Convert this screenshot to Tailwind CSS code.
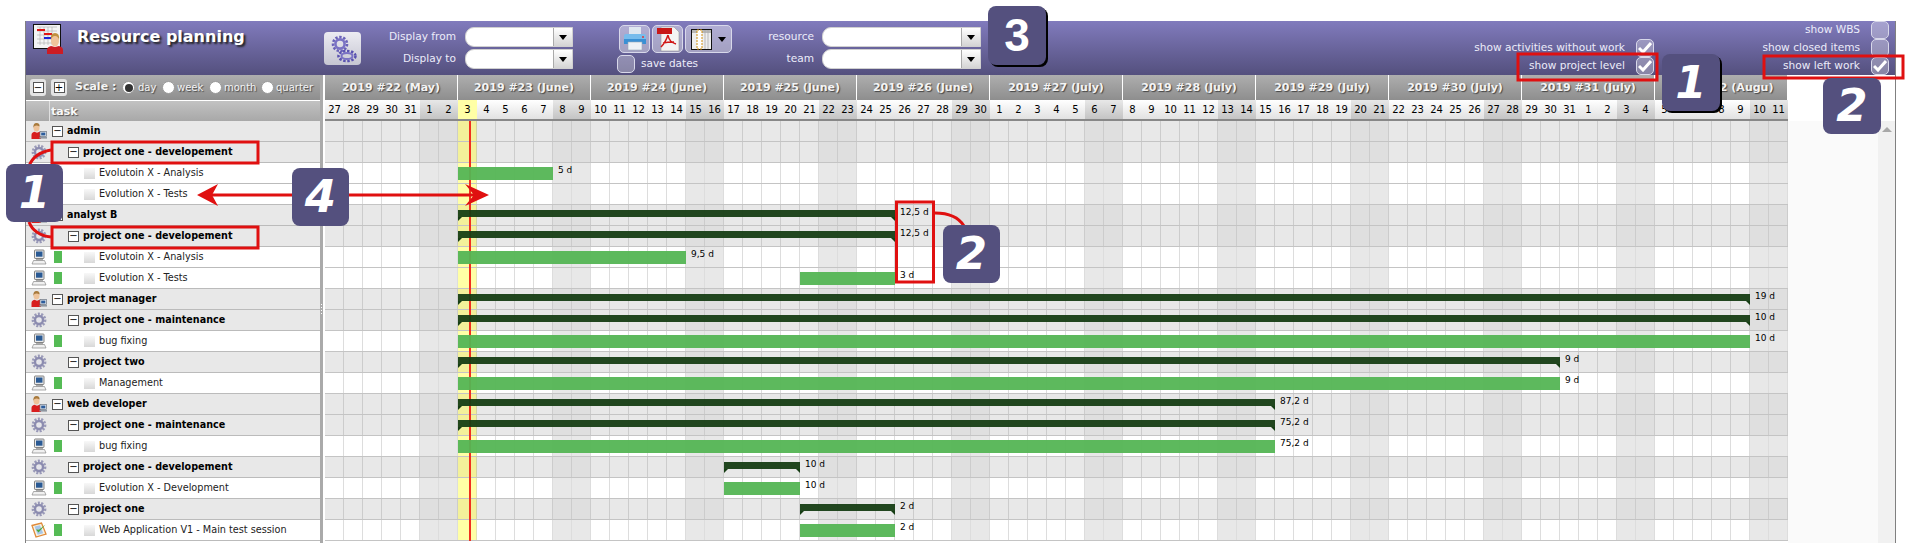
<!DOCTYPE html>
<html lang="en">
<head>
    <meta charset="UTF-8">
    <title>Resource planning</title>
    <script src="https://cdn.jsdelivr.net/npm/@tailwindcss/browser@4"></script>
</head>
<body class="bg-white font-['DejaVu_Sans',sans-serif] text-[10px] text-black overflow-hidden">
    <!-- shared icons -->
    <svg class="hidden">
        <symbol id="gear" viewBox="0 0 16 16">
            <circle cx="8" cy="8" r="6" fill="none" stroke="#9a9ab8" stroke-width="2.8" stroke-dasharray="2 1.300"/>
            <circle cx="8" cy="8" r="4" fill="none" stroke="#8c8cb0" stroke-width="2.400"/>
            <circle cx="8" cy="8" r="1.800" fill="#e4e4ee"/>
        </symbol>
        <symbol id="person" viewBox="0 0 16 16">
            <path d="M.5 16v-4q0-2.500 3-3.200l2.500 1 2.500-1q1.500.5 1.500 2v5.200z" fill="#d81e1e"/>
            <ellipse cx="5.500" cy="4.800" rx="3" ry="3.800" fill="#eec39a"/>
            <path d="M2.400 4.800q-.4-4.800 3.100-4.800t3 3.600q-2.500-1.600-5-.6z" fill="#a87a3c"/>
            <rect x="9" y="8.500" width="6.500" height="5" fill="#dfe3ea" stroke="#6c7480" stroke-width=".7"/>
            <rect x="10.200" y="9.600" width="4.100" height="2.800" fill="#2c5c9c"/>
            <rect x="8.500" y="14" width="7.500" height="1.600" fill="#8e96a0"/>
        </symbol>
        <symbol id="computer" viewBox="0 0 16 16">
            <rect x="3.500" y="1" width="9.500" height="8.500" rx=".7" fill="#e8e8e8" stroke="#666" stroke-width=".8"/>
            <rect x="5" y="2.500" width="6.500" height="5.200" fill="#2a5a94"/>
            <path d="M5 10h7v1.500H5z" fill="#aaa"/>
            <path d="M2.500 11.500h11l1.500 3.500H1z" fill="#f0f0f0" stroke="#888" stroke-width=".7"/>
        </symbol>
        <symbol id="test" viewBox="0 0 16 16">
            <path d="M1 3.500 10.500 1 15 12 5 15z" fill="#f6f2e2" stroke="#e08a3a" stroke-width="1.300"/>
            <path d="M3.500 4.500 9 3.200l3.200 8-5.500 1.600z" fill="#a8c6e8"/>
            <path d="M5 7.500 7.500 10.500 14.500 2.500 8 7.800z" fill="#46a83c"/>
        </symbol>
    </svg>

    <div class="relative mt-[21px] ml-[25px] w-[1871px] h-[522px] border-x border-[#808080]">
        <!-- toolbar -->
        <div class="flex h-[54px] bg-linear-to-b from-[#817bbd] to-[#54507e] text-[#ececfa]">
            <div class="flex w-[298px] shrink-0">
                <svg class="ml-[7px] mt-[3px] w-[31px] h-[30px]" viewBox="0 0 31 30">
                    <rect x=".5" y=".5" width="27" height="24" fill="#f4f4f4" stroke="#111"/>
                    <path d="M4 3h20M4 7h20M4 11h20M4 15h20M4 19h20M7 3v18M11 3v18M15 3v18M19 3v18" stroke="#b4b4b4" stroke-width=".7"/>
                    <rect x="4" y="5" width="8" height="2" fill="#e01515"/>
                    <rect x="11" y="9" width="8" height="2" fill="#e01515"/>
                    <rect x="11" y="13" width="7" height="2" fill="#1a22d8"/>
                    <path d="M14 30v-4q0-3 4-4l4 1 4-1q4 1 4 4v4z" fill="#cc1c24"/>
                    <ellipse cx="22" cy="17" rx="4" ry="5.500" fill="#f0c49c"/>
                    <path d="M18 16q-1-7 4-7t4 7q-1-4-4-4t-4 4z" fill="#c09040"/>
                </svg>
                <div class="ml-[13px] mt-[6px] text-[16px] leading-[20px] font-bold text-white [text-shadow:2px_2px_2px_#222]">Resource planning</div>
            </div>
            <button class="mt-[11px] w-[37px] h-[33px] shrink-0 rounded-[4px] bg-linear-to-b from-[#ececf2] to-[#c6c6d2] flex items-center justify-center">
                <svg class="w-[30px] h-[30px]" viewBox="0 0 30 30">
                    <circle cx="12" cy="10" r="7" fill="none" stroke="#6a62b8" stroke-width="2.600" stroke-dasharray="2.400 1.600"/>
                    <circle cx="12" cy="10" r="4.600" fill="none" stroke="#7a72c4" stroke-width="2.600"/>
                    <ellipse cx="19" cy="22" rx="8.500" ry="5" fill="none" stroke="#5a52b0" stroke-width="2.600" stroke-dasharray="2.400 1.600"/>
                    <ellipse cx="19" cy="22" rx="5.500" ry="3" fill="none" stroke="#7a72c4" stroke-width="2"/>
                </svg>
            </button>
            <div class="mt-[6px] grid grid-cols-[95px_108px] grid-rows-[20px_20px] gap-x-[9px] gap-y-[2px] items-center w-[212px] shrink-0 text-[10.600px]">
                <div class="text-right">Display from</div>
                <div class="flex h-[20px] rounded-l-[9px] bg-white border border-[#d0d0d0] overflow-hidden"><div class="flex-1"></div><div class="w-[19px] bg-linear-to-b from-white to-[#d4d4d4] border-l border-[#aaa] flex items-center justify-center"><i class="w-0 h-0 border-x-[4px] border-x-transparent border-t-[5px] border-t-black"></i></div></div>
                <div class="text-right">Display to</div>
                <div class="flex h-[20px] rounded-l-[9px] bg-white border border-[#d0d0d0] overflow-hidden"><div class="flex-1"></div><div class="w-[19px] bg-linear-to-b from-white to-[#d4d4d4] border-l border-[#aaa] flex items-center justify-center"><i class="w-0 h-0 border-x-[4px] border-x-transparent border-t-[5px] border-t-black"></i></div></div>
            </div>
            <div class="ml-[44px] mt-[4px] w-[125px] shrink-0">
                <div class="flex gap-[2px] ml-[2px] h-[28px]">
                    <button class="w-[31px] h-[28px] rounded-[5px] border border-[#d8d8ea] bg-white/40 flex items-center justify-center">
                        <svg class="w-[26px] h-[26px]" viewBox="0 0 26 26">
                            <path d="M7 1h12v9H7z" fill="#dfe7f0"/>
                            <path d="M2 10q0-2 2-2h18q2 0 2 2v8H2z" fill="#78bcec"/>
                            <path d="M2 13h22v5H2z" fill="#3a90d4"/>
                            <path d="M6 16h14v8H6z" fill="#eef2f6" stroke="#9aa8b8" stroke-width=".6"/>
                            <circle cx="21" cy="11" r="1" fill="#e03a3a"/>
                        </svg>
                    </button>
                    <button class="w-[31px] h-[28px] rounded-[5px] border border-[#d8d8ea] bg-white/40 flex items-center justify-center">
                        <svg class="w-[26px] h-[26px]" viewBox="0 0 26 26">
                            <path d="M6 1h13l5 5v19H6z" fill="#f4f4f4" stroke="#999" stroke-width=".6"/>
                            <rect x="2" y="2" width="15" height="6" fill="#c81818"/>
                            <path d="M13 9c-2 6-4 9-7 12M13 9c1 6 4 8 8 9M8 17c4-1 8-1 11-1" fill="none" stroke="#d01818" stroke-width="1.500"/>
                        </svg>
                    </button>
                    <button class="w-[47px] h-[28px] rounded-[5px] border border-[#d8d8ea] bg-white/40 flex items-center gap-[6px] pl-[5px]">
                        <svg class="w-[21px] h-[21px]" viewBox="0 0 21 21">
                            <rect x=".5" y=".5" width="20" height="20" fill="#eee" stroke="#111"/>
                            <rect x="1" y="1" width="19" height="3" fill="#b8b8b8"/>
                            <rect x="6" y="1" width="5" height="19" fill="#fff" stroke="#d09010" stroke-width="1" stroke-dasharray="2 1"/>
                            <path d="M14 1v19M17 1v19" stroke="#aaa" stroke-width=".8"/>
                        </svg>
                        <i class="w-0 h-0 border-x-[4px] border-x-transparent border-t-[5px] border-t-black"></i>
                    </button>
                </div>
                <div class="flex items-center mt-[2px] h-[18px]">
                    <span class="w-[18px] h-[18px] rounded-[5px] border border-[#d8d8ea] bg-white/30"></span>
                    <span class="ml-[6px] text-[10.500px]">save dates</span>
                </div>
            </div>
            <div class="mt-[6px] grid grid-cols-[72px_159px] grid-rows-[20px_20px] gap-x-[8px] gap-y-[2px] items-center w-[239px] shrink-0 text-[10.600px]">
                <div class="text-right">resource</div>
                <div class="flex h-[20px] rounded-l-[9px] bg-white border border-[#d0d0d0] overflow-hidden"><div class="flex-1"></div><div class="w-[19px] bg-linear-to-b from-white to-[#d4d4d4] border-l border-[#aaa] flex items-center justify-center"><i class="w-0 h-0 border-x-[4px] border-x-transparent border-t-[5px] border-t-black"></i></div></div>
                <div class="text-right">team</div>
                <div class="flex h-[20px] rounded-l-[9px] bg-white border border-[#d0d0d0] overflow-hidden"><div class="flex-1"></div><div class="w-[19px] bg-linear-to-b from-white to-[#d4d4d4] border-l border-[#aaa] flex items-center justify-center"><i class="w-0 h-0 border-x-[4px] border-x-transparent border-t-[5px] border-t-black"></i></div></div>
            </div>
            <div class="ml-auto flex text-[10.600px]">
                <div class="grid grid-cols-[auto_18px] grid-rows-[18px_18px_18px] gap-x-[11px] items-center">
                    <div></div><div></div>
                    <div class="text-right">show activities without work</div>
                    <div class="flex items-center justify-center w-[18px] h-[18px] rounded-[5px] border border-[#d8d8ea] bg-white/30"><svg class="w-[14px] h-[12px]" viewBox="0 0 14 12"><path d="M1 6l4 4 8-9" fill="none" stroke="#fff" stroke-width="3"/></svg></div>
                    <div class="text-right">show project level</div>
                    <div class="flex items-center justify-center w-[18px] h-[18px] rounded-[5px] border border-[#d8d8ea] bg-white/30"><svg class="w-[14px] h-[12px]" viewBox="0 0 14 12"><path d="M1 6l4 4 8-9" fill="none" stroke="#fff" stroke-width="3"/></svg></div>
                </div>
                <div class="ml-[106px] mr-[6px] grid grid-cols-[100px_18px] grid-rows-[18px_18px_18px] gap-x-[11px] items-center">
                    <div class="text-right">show WBS</div>
                    <div class="w-[18px] h-[18px] rounded-[5px] border border-[#d8d8ea] bg-white/30"></div>
                    <div class="text-right">show closed items</div>
                    <div class="w-[18px] h-[18px] rounded-[5px] border border-[#d8d8ea] bg-white/30"></div>
                    <div class="text-right">show left work</div>
                    <div class="flex items-center justify-center w-[18px] h-[18px] rounded-[5px] border border-[#d8d8ea] bg-white/30"><svg class="w-[14px] h-[12px]" viewBox="0 0 14 12"><path d="M1 6l4 4 8-9" fill="none" stroke="#fff" stroke-width="3"/></svg></div>
                </div>
            </div>
        </div>

        <!-- planning area -->
        <div class="flex h-[468px]">
            <div class="w-[294px] shrink-0">
                <div class="flex items-center h-[25px] bg-linear-to-b from-[#aeaeae] to-[#8e8e8e] text-[#f4f4f4] [text-shadow:1px_1px_1px_#444]">
                    <button class="ml-[4px] w-[16px] h-[17px] rounded-[3px] bg-[#e4e4e4] flex items-center justify-center"><span class="flex items-center justify-center w-[11px] h-[11px] border border-[#555] bg-white text-black text-[10px] leading-none [text-shadow:none]">−</span></button>
                    <button class="ml-[5px] w-[16px] h-[17px] rounded-[3px] bg-[#e4e4e4] flex items-center justify-center"><span class="flex items-center justify-center w-[11px] h-[11px] border border-[#555] bg-white text-black text-[10px] leading-none [text-shadow:none]">+</span></button>
                    <span class="ml-[8px] w-[47px] text-[11px] font-bold">Scale :</span>
                    <span class="flex items-center justify-center w-[13px] h-[13px] rounded-full bg-white border border-[#999]"><span class="w-[8px] h-[8px] rounded-full bg-[#333]"></span></span>
                    <span class="ml-[3px] w-[24px]">day</span>
                    <span class="w-[13px] h-[13px] rounded-full bg-white border border-[#999]"></span>
                    <span class="ml-[2px] w-[32px]">week</span>
                    <span class="w-[13px] h-[13px] rounded-full bg-white border border-[#999]"></span>
                    <span class="ml-[2px] w-[37px]">month</span>
                    <span class="w-[13px] h-[13px] rounded-full bg-white border border-[#999]"></span>
                    <span class="ml-[2px]">quarter</span>
                </div>
                <div class="flex h-[21px] border-t border-white bg-linear-to-b from-[#c2c2c2] to-[#a8a8a8]">
                    <div class="w-[24px] border-r border-[#e0e0e0]"></div>
                    <div class="pl-[1px] text-[11px] leading-[22px] font-bold text-[#f8f8f8] [text-shadow:1px_1px_1px_#555]">task</div>
                </div>
                <div id="taskRows"></div>
            </div>
            <div class="w-[5px] shrink-0 flex">
                <div class="w-[3px] bg-[#aaaaaa] flex flex-col items-center justify-center gap-[2px]"><i class="w-px h-px bg-white"></i><i class="w-px h-px bg-white"></i><i class="w-px h-px bg-white"></i><i class="w-px h-px bg-white"></i></div>
                <div class="w-[2px] bg-white"></div>
            </div>
            <div class="w-[1463px] shrink-0">
                <div id="weeks" class="flex h-[25px]"></div>
                <div id="days" class="flex h-[21px] border-b-2 border-[#888]"></div>
                <div id="grid" class="relative"></div>
            </div>
            <div class="flex-1 flex flex-col">
                <div class="h-[46px] bg-white"></div>
                <div class="flex-1 flex">
                    <div class="flex-1 bg-[#fafafa]"></div>
                    <div class="w-[17px] bg-[#f1f1f1] flex justify-center pt-[5px]"><span class="w-0 h-0 mt-[1px] border-x-[5px] border-x-transparent border-b-[5px] border-b-[#a8a8a8]"></span></div>
                </div>
            </div>
        </div>
    </div>

    <!-- annotations drawn over the screenshot -->
    <svg class="absolute top-0 left-0 z-20 w-[1922px] h-[550px] pointer-events-none" viewBox="0 0 1922 550" fill="none" stroke="#e01010" stroke-width="3">
        <rect x="52" y="142" width="206" height="21"/>
        <rect x="52" y="227" width="206" height="21"/>
        <rect x="896.500" y="202" width="37" height="80"/>
        <rect x="1518" y="54" width="139" height="26"/>
        <rect x="1764" y="56" width="139" height="22"/>
        <path d="M51 150Q34 153 29 166"/>
        <path d="M29 222Q34 235 51 237"/>
        <path d="M935 213Q956 213 964 226"/>
        <path d="M292 195H210M349 195H480"/>
        <path d="M197 195 218 184 212 195 218 206Z" fill="#e01010" stroke="none"/>
        <path d="M489 195 465 184 474 195 465 206Z" fill="#e01010" stroke="none"/>
    </svg>
    <div class="absolute z-30 left-[6px] top-[164px] w-[57px] h-[58px] rounded-[8px] bg-[#54507e] flex items-center justify-center text-white text-[45px] font-bold italic">1</div>
    <div class="absolute z-30 left-[292px] top-[168px] w-[57px] h-[58px] rounded-[8px] bg-[#54507e] flex items-center justify-center text-white text-[45px] font-bold italic">4</div>
    <div class="absolute z-30 left-[943px] top-[225px] w-[57px] h-[58px] rounded-[8px] bg-[#54507e] flex items-center justify-center text-white text-[45px] font-bold italic">2</div>
    <div class="absolute z-30 left-[988px] top-[6px] w-[58px] h-[59px] rounded-[8px] bg-[#54507e] shadow-[2px_2px_0_#000] flex items-center justify-center text-white text-[46px] font-bold font-['Liberation_Sans',sans-serif]">3</div>
    <div class="absolute z-30 left-[1662px] top-[54px] w-[58px] h-[57px] rounded-[8px] bg-[#54507e] shadow-[2px_2px_0_#000] flex items-center justify-center text-white text-[45px] font-bold italic">1</div>
    <div class="absolute z-30 left-[1823px] top-[78px] w-[58px] h-[56px] rounded-[8px] bg-[#54507e] flex items-center justify-center text-white text-[45px] font-bold italic">2</div>

    <script>
        const DAY = 19;
        const START = new Date(Date.UTC(2019, 4, 27));
        const MONTHS = ['January', 'February', 'March', 'April', 'May', 'June', 'July', 'Augu'];

        const rows = [
            { kind: 'res', icon: 'person', name: 'admin' },
            { kind: 'prj', name: 'project one - developement' },
            { kind: 'act', name: 'Evolutoin X - Analysis', dot: false, bar: [7, 12, '5 d'] },
            { kind: 'act', name: 'Evolution X - Tests', dot: false },
            { kind: 'res', icon: 'person', name: 'analyst B', sum: [7, 30, '12,5 d'] },
            { kind: 'prj', name: 'project one - developement', sum: [7, 30, '12,5 d'] },
            { kind: 'act', name: 'Evolutoin X - Analysis', bar: [7, 19, '9,5 d'] },
            { kind: 'act', name: 'Evolution X - Tests', bar: [25, 30, '3 d'] },
            { kind: 'res', icon: 'person', name: 'project manager', sum: [7, 75, '19 d'] },
            { kind: 'prj', name: 'project one - maintenance', sum: [7, 75, '10 d'] },
            { kind: 'act', name: 'bug fixing', bar: [7, 75, '10 d'] },
            { kind: 'prj', name: 'project two', sum: [7, 65, '9 d'] },
            { kind: 'act', name: 'Management', bar: [7, 65, '9 d'] },
            { kind: 'res', icon: 'person', name: 'web developer', sum: [7, 50, '87,2 d'] },
            { kind: 'prj', name: 'project one - maintenance', sum: [7, 50, '75,2 d'] },
            { kind: 'act', name: 'bug fixing', bar: [7, 50, '75,2 d'] },
            { kind: 'prj', name: 'project one - developement', sum: [21, 25, '10 d'] },
            { kind: 'act', name: 'Evolution X - Development', bar: [21, 25, '10 d'] },
            { kind: 'prj', name: 'project one', sum: [25, 30, '2 d'] },
            { kind: 'act', name: 'Web Application V1 - Main test session', icon: 'test', bar: [25, 30, '2 d'] }
        ];

        function collapseBox() {
            return '<span class="flex items-center justify-center w-[11px] h-[11px] border border-[#555] bg-white text-[10px] font-normal leading-none">−</span>';
        }

        function icon(name) {
            return `<svg class="ml-[5px] w-[16px] h-[16px] shrink-0"><use href="#${name}"/></svg>`;
        }

        function taskRow(r) {
            if (r.kind === 'res') {
                return `<div class="flex items-center h-[21px] border-b border-[#bbbbbb] bg-[#e8e8e8] font-bold text-[9.600px]">${icon(r.icon)}<span class="ml-[5px]">${collapseBox()}</span><span class="ml-[4px] pt-px">${r.name}</span></div>`;
            }
            if (r.kind === 'prj') {
                return `<div class="flex items-center h-[21px] border-b border-[#bbbbbb] bg-[#e8e8e8] font-bold text-[9.600px]">${icon('gear')}<span class="ml-[21px]">${collapseBox()}</span><span class="ml-[4px] pt-px">${r.name}</span></div>`;
            }
            const dot = r.dot === false
                ? '<span class="ml-[7px] w-[8px] h-[12px]"></span>'
                : '<span class="ml-[7px] w-[8px] h-[12px] bg-[#55bb55]"></span>';
            const ic = r.dot === false ? '<span class="ml-[5px] w-[16px]"></span>' : icon(r.icon || 'computer');
            return `<div class="flex items-center h-[21px] border-b border-[#bbbbbb] bg-white text-[9.700px]">${ic}${dot}<span class="ml-[22px] w-[11px] h-[11px] bg-linear-to-b from-[#f8f8f8] to-[#d8d8d8]"></span><span class="ml-[4px] text-[#222]">${r.name}</span></div>`;
        }

        function ganttRow(r) {
            let cells = '';
            const shaded = r.kind !== 'act';
            for (let i = 0; i < 77; i++) {
                const weekend = i % 7 >= 5;
                let cls;
                if (i === 7) cls = shaded ? 'bg-[#f3f19a] border-[#d4d4a0]' : 'bg-[#ffffa6] border-[#e4e4b0]';
                else if (shaded) cls = weekend ? 'bg-[#dfdfdf] border-[#cccccc]' : 'bg-[#e8e8e8] border-[#cccccc]';
                else cls = weekend ? 'bg-[#e8e8e8] border-[#dddddd]' : 'bg-white border-[#dddddd]';
                cells += `<div class="w-[19px] h-full border-r ${cls}"></div>`;
            }
            let bar = '';
            if (r.sum) {
                const [a, b, label] = r.sum;
                bar = `<div class="absolute z-10 top-[5px] h-[7px] bg-[#163d14]/95" style="left:${a * DAY}px;width:${(b - a) * DAY}px">
                    <i class="absolute left-0 top-full w-0 h-0 border-t-[4px] border-t-[#163d14] border-r-[4px] border-r-transparent"></i>
                    <i class="absolute right-0 top-full w-0 h-0 border-t-[4px] border-t-[#163d14] border-l-[4px] border-l-transparent"></i>
                </div><div class="absolute top-[1px] leading-[12px] text-[9px]" style="left:${b * DAY + 5}px">${label}</div>`;
            }
            if (r.bar) {
                const [a, b, label] = r.bar;
                bar = `<div class="absolute z-10 top-[4px] h-[13px] bg-[#54b554]/95" style="left:${a * DAY}px;width:${(b - a) * DAY}px"></div><div class="absolute top-[1px] leading-[12px] text-[9px]" style="left:${b * DAY + 5}px">${label}</div>`;
            }
            return `<div class="relative flex h-[21px] border-b border-[#c4c4c4]">${cells}${bar}</div>`;
        }

        // timeline headers
        let weeksHtml = '', daysHtml = '';
        for (let w = 0; w < 11; w++) {
            const mon = new Date(START.getTime() + w * 7 * 86400000);
            weeksHtml += `<div class="w-[133px] shrink-0 border-r border-white bg-linear-to-b from-[#aeaeae] to-[#8e8e8e] text-center text-[11px] leading-[25px] font-bold text-[#f4f4f4] [text-shadow:1px_1px_1px_#444] overflow-hidden whitespace-nowrap">2019 #${22 + w} (${MONTHS[mon.getUTCMonth()]})</div>`;
        }
        for (let i = 0; i < 77; i++) {
            const d = new Date(START.getTime() + i * 86400000);
            let cls = 'bg-linear-to-b from-white to-[#e2e2e2]';
            if (i === 7) cls = 'bg-[#ffffa6]';
            else if (i % 7 >= 5) cls = 'bg-linear-to-b from-[#e8e8e8] to-[#c4c4c4]';
            daysHtml += `<div class="w-[19px] shrink-0 text-center leading-[19px] ${cls}">${d.getUTCDate()}</div>`;
        }
        document.getElementById('weeks').innerHTML = weeksHtml;
        document.getElementById('days').innerHTML = daysHtml;
        document.getElementById('taskRows').innerHTML = rows.map(taskRow).join('');
        // today marker sits under the bars (z-10) but over the cells
        document.getElementById('grid').innerHTML =
            rows.map(ganttRow).join('') +
            '<div class="absolute z-[5] top-0 bottom-0 left-[144px] w-[2px] bg-[#f03020]"></div>';
    </script>
</body>
</html>
